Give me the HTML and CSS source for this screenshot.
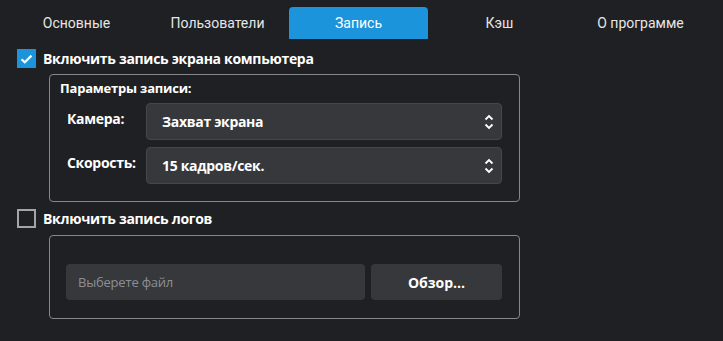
FILE: index.html
```html
<!DOCTYPE html>
<html lang="ru">
<head>
<meta charset="utf-8">
<link rel="stylesheet" href="styles.css">
</head>
<body>
<div class="tabs">
  <div class="tab">Основные</div>
  <div class="tab">Пользователи</div>
  <div class="tab active">Запись</div>
  <div class="tab">Кэш</div>
  <div class="tab">О программе</div>
</div>
<div class="content">
  <label class="check-row">
    <span class="checkbox checked">
      <svg width="13" height="10" viewBox="0 0 13 10"><path d="M1.5 5.2 L4.8 8.3 L11.5 1.6" fill="none" stroke="#fff" stroke-width="2.2"/></svg>
    </span>
    <span class="check-label">Включить запись экрана компьютера</span>
  </label>
  <div class="group group-rec">
    <div class="group-title">Параметры записи:</div>
    <div class="field">
      <div class="field-label">Камера:</div>
      <div class="select">
        <span>Захват экрана</span>
        <svg class="chev" width="10" height="16" viewBox="0 0 10 16"><path d="M1.5 5.5 L5 2 L8.5 5.5 M1.5 10.5 L5 14 L8.5 10.5" fill="none" stroke="#fff" stroke-width="1.8"/></svg>
      </div>
    </div>
    <div class="field">
      <div class="field-label">Скорость:</div>
      <div class="select">
        <span>15 кадров/сек.</span>
        <svg class="chev" width="10" height="16" viewBox="0 0 10 16"><path d="M1.5 5.5 L5 2 L8.5 5.5 M1.5 10.5 L5 14 L8.5 10.5" fill="none" stroke="#fff" stroke-width="1.8"/></svg>
      </div>
    </div>
  </div>
  <label class="check-row check-row2">
    <span class="checkbox"></span>
    <span class="check-label">Включить запись логов</span>
  </label>
  <div class="group group-log">
    <div class="file-row">
      <div class="file-input">Выберете файл</div>
      <div class="browse">Обзор...</div>
    </div>
  </div>
</div>
</body>
</html>
```
FILE: styles.css
```css
* { box-sizing: border-box; }
html, body {
  margin: 0;
  background: #1f2023;
  width: 723px;
  height: 341px;
  overflow: hidden;
}
body {
  font-family: "Open Sans", "DejaVu Sans", sans-serif;
  color: #ffffff;
}
.tabs {
  display: flex;
  gap: 2px;
  padding: 7px 0 0 7px;
}
.tab {
  width: 139px;
  height: 32px;
  display: flex;
  align-items: center;
  justify-content: center;
  font-family: Roboto, "Open Sans", sans-serif;
  font-size: 14px;
  color: #e6e6e6;
  border-radius: 4px 4px 0 0;
}
.tab.active {
  background: #1b94dc;
  color: #ffffff;
}
.content {
  padding: 10px 0 0 17px;
}
.check-row {
  display: flex;
  align-items: center;
  height: 19px;
}
.checkbox {
  width: 19px;
  height: 19px;
  border: 2px solid #a3a5a8;
  display: flex;
  align-items: center;
  justify-content: center;
  flex: none;
}
.checkbox.checked {
  background: #1b94dc;
  border-color: #1b94dc;
}
.check-label {
  margin-left: 7px;
  font-weight: 700;
  font-size: 14px;
  letter-spacing: -0.3px;
}
.group {
  margin-left: 32px;
  width: 471px;
  border: 1px solid #85878a;
  border-radius: 4px;
}
.group-rec {
  margin-top: 6px;
  height: 128px;
  padding: 3px 16px 0 10px;
}
.group-title {
  font-weight: 700;
  font-size: 13px;
  height: 20px;
  line-height: 20px;
  letter-spacing: -0.2px;
}
.field {
  display: flex;
  align-items: flex-start;
  margin-top: 5px;
}
.field + .field { margin-top: 7px; }
.field-label {
  width: 86px;
  padding-left: 7px;
  padding-top: 6px;
  font-weight: 700;
  font-size: 14px;
  letter-spacing: -0.3px;
}
.select {
  width: 356px;
  height: 37px;
  background: #36383c;
  border: 1px solid #45474b;
  border-radius: 4px;
  display: flex;
  align-items: center;
  justify-content: space-between;
  padding: 0 7px 0 15px;
  font-weight: 700;
  font-size: 14px;
  letter-spacing: -0.3px;
}
.chev { flex: none; }
.check-row2 { margin-top: 7px; }
.group-log {
  margin-top: 7px;
  height: 84px;
  padding: 28px 16px 0 16px;
}
.file-row {
  display: flex;
  gap: 6px;
}
.file-input {
  width: 299px;
  height: 36px;
  background: #36383c;
  border-radius: 4px;
  display: flex;
  align-items: center;
  padding-left: 12px;
  font-size: 13px;
  color: #8d8f92;
  letter-spacing: -0.2px;
}
.browse {
  width: 131px;
  height: 36px;
  background: #36383c;
  border-radius: 4px;
  display: flex;
  align-items: center;
  justify-content: center;
  font-weight: 700;
  font-size: 14px;
}
```
